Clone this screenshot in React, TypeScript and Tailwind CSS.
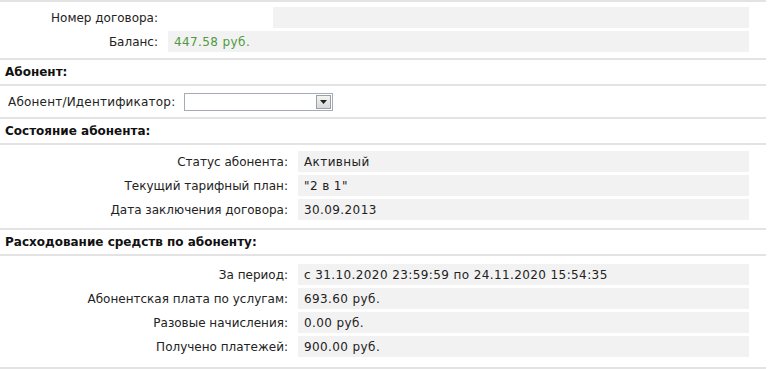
import React from 'react';

const font = { fontFamily: '"DejaVu Sans", Verdana, sans-serif' };

const Sep = () => <div className="h-[2px] w-[766px] bg-[#e3e3e3]" />;

const Row = ({ label, value }: { label: string; value: string }) => (
  <div className="flex items-center h-[21px]">
    <div className="w-[298px] shrink-0 text-right pr-[10px]">{label}</div>
    <div className="w-[451px] h-[21px] bg-[#f2f2f2] flex items-center pl-[6px] tracking-[0.4px]">{value}</div>
  </div>
);

const Heading = ({ children }: { children: React.ReactNode }) => (
  <div className="h-[24px] flex items-center pl-[5px] font-bold text-[#111]">{children}</div>
);

export default function App() {
  return (
    <div className="w-[774px] h-[369px] bg-white text-[12px] text-[#222] overflow-hidden" style={font}>
      <Sep />
      <div className="flex flex-col gap-[3px] pt-[5px] pb-[6px]">
        <div className="flex items-center h-[21px]">
          <div className="w-[168px] shrink-0 text-right pr-[10px]">Номер договора:</div>
          <div className="w-[105px] h-[21px] bg-white" />
          <div className="w-[476px] h-[21px] bg-[#f2f2f2]" />
        </div>
        <div className="flex items-center h-[21px]">
          <div className="w-[168px] shrink-0 text-right pr-[10px]">Баланс:</div>
          <div className="w-[581px] h-[21px] bg-[#f2f2f2] flex items-center pl-[6px] tracking-[0.4px] text-[#4f9a3f]">447.58 руб.</div>
        </div>
      </div>
      <Sep />
      <Heading>Абонент:</Heading>
      <Sep />
      <div className="h-[31px] flex items-center pl-[8px]">
        <span className="w-[176px] shrink-0 tracking-[0.2px]">Абонент/Идентификатор:</span>
        <div className="w-[149px] h-[18px] border border-[#a5acb5] bg-white flex justify-end items-center pr-[1px]">
          <div className="w-[15px] h-[14px] border border-[#9aa0a8] bg-gradient-to-b from-[#f4f4f4] to-[#d8d8d8] flex items-center justify-center">
            <svg width="7" height="4" viewBox="0 0 7 4"><path d="M0 0h7L3.5 4z" fill="#222" /></svg>
          </div>
        </div>
      </div>
      <Sep />
      <Heading>Состояние абонента:</Heading>
      <Sep />
      <div className="flex flex-col gap-[3px] pt-[6px] pb-[8px]">
        <Row label="Статус абонента:" value="Активный" />
        <Row label="Текущий тарифный план:" value='"2 в 1"' />
        <Row label="Дата заключения договора:" value="30.09.2013" />
      </div>
      <Sep />
      <Heading>Расходование средств по абоненту:</Heading>
      <Sep />
      <div className="flex flex-col gap-[3px] pt-[8px] pb-[10px]">
        <Row label="За период:" value="с 31.10.2020 23:59:59 по 24.11.2020 15:54:35" />
        <Row label="Абонентская плата по услугам:" value="693.60 руб." />
        <Row label="Разовые начисления:" value="0.00 руб." />
        <Row label="Получено платежей:" value="900.00 руб." />
      </div>
      <Sep />
    </div>
  );
}
